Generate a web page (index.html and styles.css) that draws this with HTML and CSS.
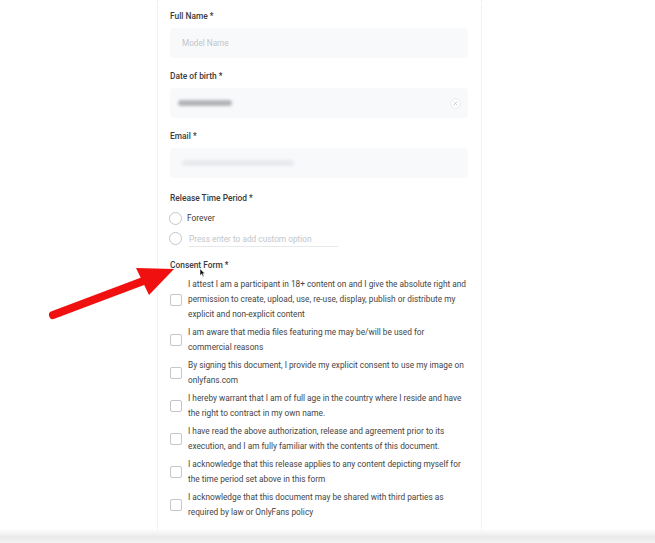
FILE: index.html
```html
<!DOCTYPE html>
<html lang="en">
<head>
<meta charset="utf-8">
<title>Release Form</title>
<link rel="stylesheet" href="styles.css">
</head>
<body>
<div class="page">
  <div class="main">
    <div class="card">
      <div class="field">
        <div class="label">Full Name *</div>
        <div class="input"><span class="placeholder">Model Name</span></div>
      </div>
      <div class="field">
        <div class="label">Date of birth *</div>
        <div class="input input-date">
          <span class="blur blur-date"></span>
          <span class="clear">
            <svg viewBox="0 0 12 12" width="11" height="11"><circle cx="6" cy="6" r="5.2" fill="#fff" stroke="#e3e5e8" stroke-width="0.9"/><path d="M4.4 4.4 L7.6 7.6 M7.6 4.4 L4.4 7.6" stroke="#b8bcc2" stroke-width="0.8" stroke-linecap="round"/></svg>
          </span>
        </div>
      </div>
      <div class="field field-last">
        <div class="label">Email *</div>
        <div class="input"><span class="blur blur-email"></span></div>
      </div>
      <div class="group">
        <div class="label">Release Time Period *</div>
        <div class="radios">
          <div class="radio-row"><span class="radio"></span><span class="radio-text">Forever</span></div>
          <div class="radio-row"><span class="radio"></span><span class="custom">Press enter to add custom option</span></div>
        </div>
      </div>
      <div class="group consent">
        <div class="label">Consent Form *</div>
        <div class="checks">
          <div class="check-row"><span class="checkbox"></span><span class="check-text">I attest I am a participant in 18+ content on and I give the absolute right and permission to create, upload, use, re-use, display, publish or distribute my explicit and non-explicit content</span></div>
          <div class="check-row"><span class="checkbox"></span><span class="check-text">I am aware that media files featuring me may be/will be used for commercial reasons</span></div>
          <div class="check-row"><span class="checkbox"></span><span class="check-text">By signing this document, I provide my explicit consent to use my image on onlyfans.com</span></div>
          <div class="check-row"><span class="checkbox"></span><span class="check-text">I hereby warrant that I am of full age in the country where I reside and have the right to contract in my own name.</span></div>
          <div class="check-row"><span class="checkbox"></span><span class="check-text">I have read the above authorization, release and agreement prior to its execution, and I am fully familiar with the contents of this document.</span></div>
          <div class="check-row"><span class="checkbox"></span><span class="check-text">I acknowledge that this release applies to any content depicting myself for the time period set above in this form</span></div>
          <div class="check-row"><span class="checkbox"></span><span class="check-text">I acknowledge that this document may be shared with third parties as required by law or OnlyFans policy</span></div>
        </div>
      </div>
    </div>
  </div>
  <div class="footer-shadow"></div>

  <svg class="arrow" viewBox="0 0 655 543" width="655" height="543">
    <line x1="53" y1="315" x2="146" y2="280" stroke="#f01010" stroke-width="8" stroke-linecap="round"/>
    <polygon points="136,268 174,269 149,295" fill="#f01010"/>
  </svg>
  <svg class="cursor" viewBox="0 0 8 12" width="7" height="10">
    <path d="M1 1 L1 9 L3 7.2 L4.6 10.6 L5.8 10 L4.3 6.8 L6.8 6.6 Z" fill="#111" stroke="#fff" stroke-width="0.6"/>
  </svg>
</div>
</body>
</html>
```

FILE: styles.css
```css
* { box-sizing: border-box; }
html, body { margin: 0; padding: 0; background: #fff; }
body {
  font-family: Roboto, "Liberation Sans", Arial, sans-serif;
  color: #555;
}
.page {
  position: relative;
  width: 655px;
  height: 543px;
  overflow: hidden;
  display: flex;
  flex-direction: column;
}
.main {
  flex: 1;
  min-height: 0;
  overflow: hidden;
}
.card {
  margin-left: 157px;
  width: 325px;
  height: 100%;
  border-left: 1px dotted #e6e8eb;
  border-right: 1px dotted #e6e8eb;
  padding: 10px 12px 0 12px;
}
.field { margin-bottom: 12px; }
.field-last { margin-bottom: 14px; }
.label {
  font-size: 8.4px;
  line-height: 12px;
  height: 12px;
  color: #3a3a3a;
  font-weight: 500;
}
.field .label { margin-bottom: 6px; }
.input {
  height: 30px;
  width: 298px;
  background: #f8f9fb;
  border-radius: 4px;
  display: flex;
  align-items: center;
  padding: 0 12px;
}
.placeholder {
  font-size: 8.2px;
  color: #c3c6cc;
}
.input-date { justify-content: space-between; padding: 0 7px 0 8px; }
.blur {
  display: block;
  height: 6px;
  border-radius: 3px;
  filter: blur(1.6px);
}
.blur-date { width: 54px; background: #b4b4b8; }
.blur-email { width: 112px; background: #e9eaed; }
.clear { display: flex; }
.radios {
  margin-top: 4px;
  display: flex;
  flex-direction: column;
}
.radio-row {
  height: 20px;
  display: flex;
  align-items: center;
}
.radio {
  width: 13px;
  height: 13px;
  border: 1px solid #c4c6ca;
  border-radius: 50%;
  margin-left: -1px;
  background: #fff;
  flex: none;
}
.radio-text {
  margin-left: 5px;
  font-size: 8.4px;
  color: #404040;
}
.custom {
  margin-left: 7px;
  width: 149px;
  font-size: 8.3px;
  color: #c3c6cc;
  line-height: 14px;
  border-bottom: 1px solid #e6e8eb;
  margin-top: 2px;
}
.consent { margin-top: 11px; }
.checks {
  margin-top: 6px;
  display: flex;
  flex-direction: column;
  gap: 3px;
}
.check-row {
  display: flex;
  align-items: center;
}
.checkbox {
  width: 12px;
  height: 12px;
  border: 1px solid #c4c6ca;
  border-radius: 2px;
  background: #fff;
  flex: none;
  margin-right: 6px;
}
.check-text {
  width: 281px;
  font-size: 8.3px;
  line-height: 15px;
  color: #454545;
}
.footer-shadow {
  height: 13px;
  flex: none;
  background: linear-gradient(to bottom, #fbfbfb 0%, #eaeaea 55%, #f3f3f3 100%);
}
.arrow {
  position: absolute;
  left: 0;
  top: 0;
  pointer-events: none;
}
.cursor {
  position: absolute;
  left: 199px;
  top: 268px;
}
```
